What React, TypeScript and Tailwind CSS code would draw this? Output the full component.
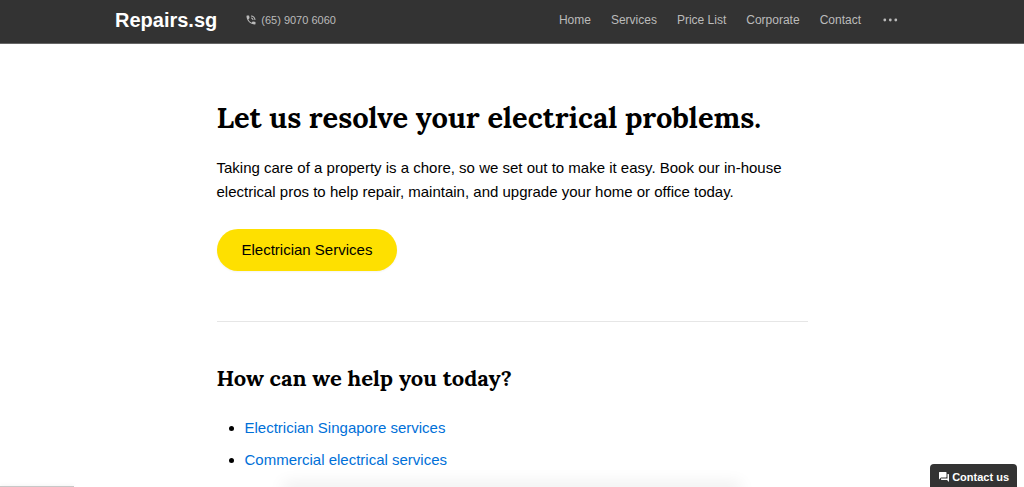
import { MdPhoneInTalk, MdQuestionAnswer } from 'react-icons/md';

const NAV_LINKS = [
  { label: 'Home', href: '#home' },
  { label: 'Services', href: '#services' },
  { label: 'Price List', href: '#price-list' },
  { label: 'Corporate', href: '#corporate' },
  { label: 'Contact', href: '#contact' },
];

const HELP_LINKS = [
  { label: 'Electrician Singapore services', href: '#electrician' },
  { label: 'Commercial electrical services', href: '#commercial' },
];

function Header() {
  return (
    <header className="bg-[#333] border-b border-[#666]">
      <div className="max-w-[794px] pt-2 pb-[11px] pr-2 mx-auto flex items-center justify-between">
        <div className="flex items-center gap-7">
          <a href="#home" className="text-xl leading-6 font-bold text-white">
            Repairs.sg
          </a>
          <a href="tel:+6590706060" className="flex items-center gap-1 text-[11px] text-[#bbb]">
            <MdPhoneInTalk className="w-3 h-3" />
            (65) 9070 6060
          </a>
        </div>

        <nav className="flex items-center gap-5 text-xs text-[#bbb]">
          {NAV_LINKS.map((link) => (
            <a key={link.label} href={link.href}>
              {link.label}
            </a>
          ))}
          <button type="button" aria-label="More">
            <svg className="w-5 h-5" viewBox="0 0 20 20" fill="currentColor">
              <circle cx="3.8" cy="10" r="1.4" />
              <circle cx="9.3" cy="10" r="1.4" />
              <circle cx="14.8" cy="10" r="1.4" />
            </svg>
          </button>
        </nav>
      </div>
    </header>
  );
}

export default function App() {
  return (
    <div className="h-screen overflow-hidden bg-white text-black font-['Helvetica_Neue','Liberation_Sans',sans-serif]">
      <Header />

      <main className="max-w-[591px] mx-auto pt-[54px] text-[15px] leading-6">
        {/* Hero */}
        <section className="pb-[50px] border-b border-[#e6e6e6]">
          <h1 className="text-[29px] leading-10 font-bold font-['Lora','Liberation_Serif',serif]">
            Let us resolve your electrical problems.
          </h1>
          <p className="mt-[18px]">
            Taking care of a property is a chore, so we set out to make it easy. Book our in-house
            electrical pros to help repair, maintain, and upgrade your home or office today.
          </p>
          <a
            href="#services"
            className="inline-block mt-[25px] px-[25px] py-[9px] rounded-full bg-[#fee000] shadow-xs"
          >
            Electrician Services
          </a>
        </section>

        {/* Help links */}
        <section className="pt-10">
          <h2 className="text-[22px] leading-8 font-bold font-['Lora','Liberation_Serif',serif]">
            How can we help you today?
          </h2>
          <ul className="mt-[22px] pl-7 flex flex-col gap-2 list-disc">
            {HELP_LINKS.map((link) => (
              <li key={link.label}>
                <a href={link.href} className="text-[#0070d8]">
                  {link.label}
                </a>
              </li>
            ))}
          </ul>
        </section>
      </main>

      <div className="fixed left-[28%] right-[28%] -bottom-1 h-1 shadow-[0_0_16px_4px_rgba(0,0,0,0.08)]" />
      <div className="fixed left-0 bottom-0 w-[74px] h-px bg-[#c8c8c8] shadow-[0_0_4px_rgba(0,0,0,0.15)]" />

      <button
        type="button"
        className="fixed right-[7px] bottom-0 flex items-center gap-[2px] h-[23px] px-2 pt-[3px] rounded-t bg-[#333] text-[11px] font-bold text-white"
      >
        <MdQuestionAnswer className="w-3 h-3" />
        Contact us
      </button>
    </div>
  );
}
